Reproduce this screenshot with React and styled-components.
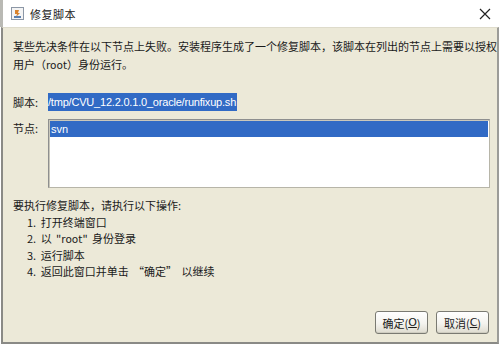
import React from "react";
import styled, { createGlobalStyle } from "styled-components";

const Global = createGlobalStyle`
  html, body { margin: 0; padding: 0; background: #ffffff; }
  body { width: 500px; height: 345px; overflow: hidden; font-family: "Liberation Sans", "Noto Sans CJK SC", sans-serif; }
`;

const Window = styled.div`
  width: 500px;
  height: 345px;
  display: flex;
  flex-direction: column;
  background: #ffffff;
  box-sizing: border-box;
`;

const TitleBar = styled.div`
  height: 27px;
  display: flex;
  align-items: center;
  padding: 0 9px 0 8px;
  border-left: 3px solid #b9b9b4;
  box-sizing: border-box;
  background: #ffffff;
`;

const TitleText = styled.span`
  margin-left: 6px;
  font-size: 11px;
  letter-spacing: 0.5px;
  color: #1a1a1a;
  font-family: "Noto Sans CJK SC", sans-serif;
  flex: 1;
`;

const Close = styled.div`
  width: 12px;
  height: 12px;
  display: flex;
  align-items: center;
  justify-content: center;
`;

const Body = styled.div`
  flex: 1;
  background: #ece9d8;
  border-left: 2px solid #8a8a86;
  border-right: 2px solid #9c9c98;
  border-bottom: 2px solid #8a8a86;
  border-top: 1px solid #dedbcb;
  margin-left: 1px;
  margin-right: 1px;
  margin-bottom: 1px;
  display: flex;
  flex-direction: column;
  padding: 9px 7px 0 10px;
  font-size: 11px;
  color: #1a1a1a;
  font-family: "Noto Sans CJK SC", sans-serif;
`;

const Para = styled.div`
  line-height: 18px;
  white-space: nowrap;
`;

const FieldRow = styled.div`
  display: flex;
  align-items: ${p => (p.$top ? "flex-start" : "center")};
  margin-top: ${p => p.$mt}px;
`;

const Label = styled.div`
  width: 35px;
  flex: none;
  line-height: 18px;
`;

const Selected = styled.span`
  background: #316ac5;
  color: #ffffff;
  font-family: "Liberation Sans", sans-serif;
  font-size: 11px;
  letter-spacing: -0.2px;
  line-height: 18px;
  padding: 0 1px 0 0;
  display: inline-block;
`;

const ListBox = styled.div`
  flex: 1;
  height: 66px;
  background: #ffffff;
  border: 1px solid #8e8f8f;
  border-right-color: #b7b5a8;
  border-bottom-color: #b7b5a8;
  box-shadow: inset 1px 1px 0 #c9c7bb;
  padding: 1px 1px 0 1px;
`;

const ListItem = styled.div`
  background: #316ac5;
  color: #ffffff;
  font-family: "Liberation Sans", sans-serif;
  font-size: 11px;
  height: 16px;
  line-height: 16px;
  padding-left: 1px;
`;

const Steps = styled.div`
  margin-top: 9px;
`;

const StepsHead = styled.div`
  line-height: 17px;
`;

const StepList = styled.ol`
  margin: 0;
  padding: 0 0 0 14px;
  list-style: none;
`;

const Step = styled.li`
  line-height: 16px;
  word-spacing: 2px;
`;

const Footer = styled.div`
  margin-top: auto;
  display: flex;
  justify-content: flex-end;
  gap: 8px;
  padding: 0 1px 8px 0;
`;

const Button = styled.button`
  width: 53px;
  height: 23px;
  padding: 0;
  font-family: "Noto Sans CJK SC", sans-serif;
  font-size: 11px;
  color: #1a1a1a;
  background: linear-gradient(#ffffff, #f4f3ee 55%, #dedbcf);
  border: 1px solid #7a7a72;
  border-radius: 3px;
  box-shadow: inset 0 -1px 0 #cfcdc1;
  display: flex;
  align-items: center;
  justify-content: center;
`;

const U = styled.span`
  text-decoration: underline;
  font-family: "DejaVu Sans", sans-serif;
  font-size: 11px;
`;

const Latin = styled.span`
  font-family: "DejaVu Sans", sans-serif;
  font-size: 10.5px;
`;

function AppIcon() {
  return (
    <svg width="13" height="13" viewBox="0 0 13 13">
      <rect x="0.5" y="0.5" width="12" height="12" fill="#f4f4f4" stroke="#8c97a6" />
      <path d="M4 3 L8 3 L7 6 L9 6 L5 10 L6 7 L4 7 Z" fill="#d9822b" />
      <rect x="3" y="9" width="7" height="2" fill="#5b7fae" />
    </svg>
  );
}

export default function App() {
  return (
    <Window>
      <Global />
      <TitleBar>
        <AppIcon />
        <TitleText>修复脚本</TitleText>
        <Close>
          <svg width="12" height="12" viewBox="0 0 12 12">
            <path d="M1 1 L11 11 M11 1 L1 11" stroke="#222" strokeWidth="1.2" />
          </svg>
        </Close>
      </TitleBar>
      <Body>
        <Para>
          某些先决条件在以下节点上失败。安装程序生成了一个修复脚本，该脚本在列出的节点上需要以授权
          <br />
          用户（<Latin>root</Latin>）身份运行。
        </Para>
        <FieldRow $mt={19}>
          <Label>脚本:</Label>
          <Selected>/tmp/CVU_12.2.0.1.0_oracle/runfixup.sh</Selected>
        </FieldRow>
        <FieldRow $mt={8} $top>
          <Label>节点:</Label>
          <ListBox>
            <ListItem>svn</ListItem>
          </ListBox>
        </FieldRow>
        <Steps>
          <StepsHead>要执行修复脚本，请执行以下操作:</StepsHead>
          <StepList>
            <Step>1. 打开终端窗口</Step>
            <Step>2. 以 "<Latin>root</Latin>" 身份登录</Step>
            <Step>3. 运行脚本</Step>
            <Step>4. 返回此窗口并单击 “确定” 以继续</Step>
          </StepList>
        </Steps>
        <Footer>
          <Button>确定(<U>O</U>)</Button>
          <Button>取消(<U>C</U>)</Button>
        </Footer>
      </Body>
    </Window>
  );
}
